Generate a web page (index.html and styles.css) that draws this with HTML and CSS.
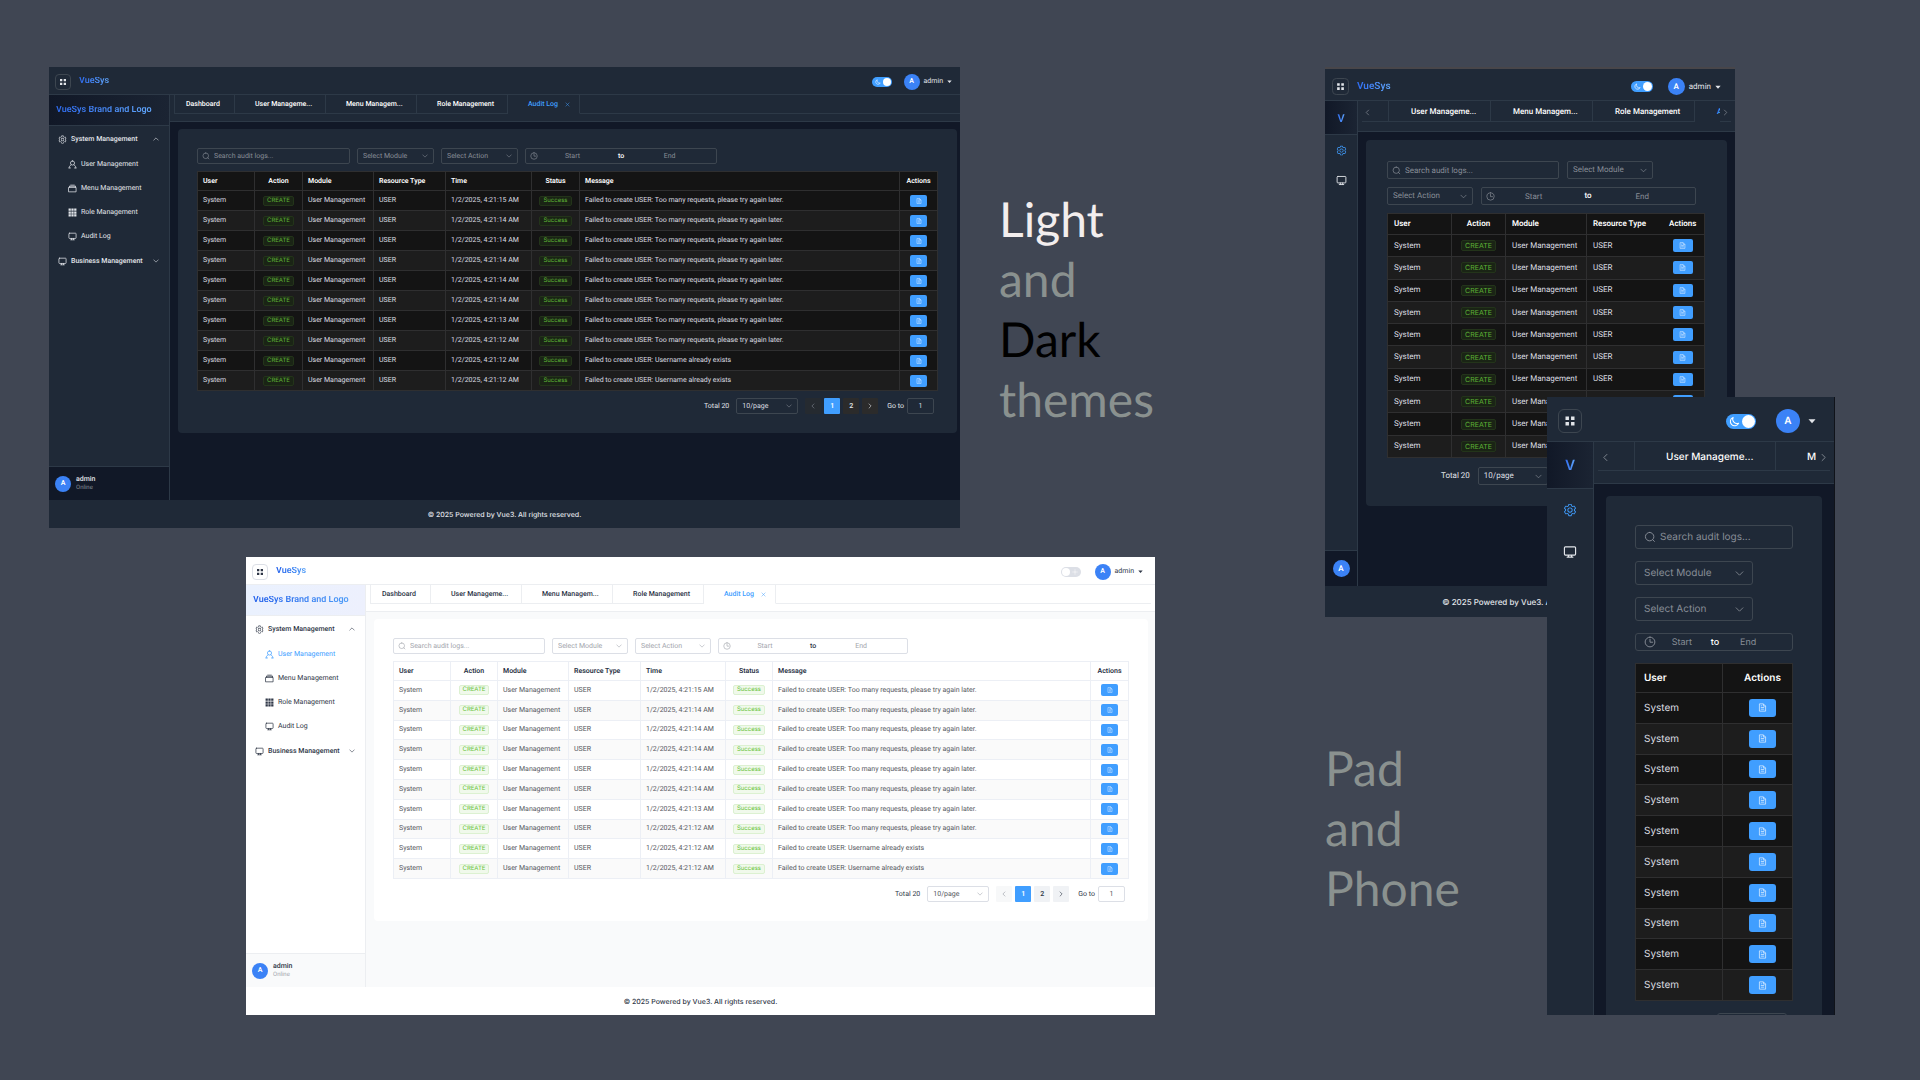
FILE: index.html
```html
<!DOCTYPE html>
<html lang="en">
<head>
<meta charset="utf-8">
<meta name="viewport" content="width=device-width, initial-scale=1">
<title>VueSys</title>
<link rel="stylesheet" href="styles.css">
<script src="app.js" defer></script>
</head>
<body>
<svg class="sprite" aria-hidden="true">
  <symbol id="i-apps" viewBox="0 0 16 16"><path fill="currentColor" d="M2 2h4.600v4.600H2zM9.400 2H14v4.600H9.400zM2 9.400h4.600V14H2zM9.400 9.400H14V14H9.400z"/></symbol>
  <symbol id="i-gear" viewBox="0 0 1024 1024"><path fill="currentColor" d="M600.704 64a32 32 0 0 1 30.464 22.208l35.2 109.376c14.784 7.232 28.928 15.36 42.432 24.512l112.384-24.192a32 32 0 0 1 34.432 15.36L944.32 364.8a32 32 0 0 1-4.032 37.504l-77.12 85.12a357.12 357.12 0 0 1 0 49.024l77.12 85.248a32 32 0 0 1 4.032 37.504l-88.704 153.6a32 32 0 0 1-34.432 15.296L708.8 803.904c-13.44 9.088-27.648 17.28-42.368 24.512l-35.264 109.376A32 32 0 0 1 600.704 960H423.296a32 32 0 0 1-30.464-22.208L357.696 828.48a351.616 351.616 0 0 1-42.56-24.64l-112.32 24.256a32 32 0 0 1-34.432-15.36L79.68 659.2a32 32 0 0 1 4.032-37.504l77.12-85.248a357.12 357.12 0 0 1 0-48.896l-77.12-85.248A32 32 0 0 1 79.68 364.8l88.704-153.6a32 32 0 0 1 34.432-15.296l112.32 24.256c13.568-9.152 27.776-17.408 42.56-24.64l35.2-109.312A32 32 0 0 1 423.232 64H600.64zm-23.424 64H446.72l-36.352 113.088-24.512 11.968a294.113 294.113 0 0 0-34.816 20.096l-22.656 15.36-116.224-25.088-65.28 113.152 79.68 88.192-1.92 27.136a293.12 293.12 0 0 0 0 40.192l1.92 27.136-79.808 88.192 65.344 113.152 116.224-25.024 22.656 15.296a294.113 294.113 0 0 0 34.816 20.096l24.512 11.968L446.72 896h130.688l36.48-113.152 24.448-11.904a288.282 288.282 0 0 0 34.752-20.096l22.592-15.296 116.288 25.024 65.28-113.152-79.744-88.192 1.92-27.136a293.12 293.12 0 0 0 0-40.256l-1.92-27.136 79.808-88.128-65.344-113.152-116.288 24.96-22.592-15.232a287.616 287.616 0 0 0-34.752-20.096l-24.448-11.904L577.344 128zM512 320a192 192 0 1 1 0 384 192 192 0 0 1 0-384zm0 64a128 128 0 1 0 0 256 128 128 0 0 0 0-256z"/></symbol>
  <symbol id="i-monitor" viewBox="0 0 1024 1024"><path fill="none" stroke="currentColor" stroke-width="84" stroke-linecap="round" d="M176 136h672a72 72 0 0 1 72 72v456a72 72 0 0 1-72 72H176a72 72 0 0 1-72-72V208a72 72 0 0 1 72-72zM400 740v130M624 740v130M304 890h416"/></symbol>
  <symbol id="i-user" viewBox="0 0 1024 1024"><path fill="none" stroke="currentColor" stroke-width="84" stroke-linecap="round" d="M512 104a236 236 0 1 1 0 472 236 236 0 0 1 0-472zM120 904c10-150 80-260 210-340M904 904c-10-150-80-260-210-340M120 904h160M744 904h160"/></symbol>
  <symbol id="i-files" viewBox="0 0 1024 1024"><path fill="none" stroke="currentColor" stroke-width="84" stroke-linejoin="round" stroke-linecap="round" d="M104 392h816v500H104zM180 260h664M300 130h424M180 260v120M844 260v120"/></symbol>
  <symbol id="i-grid" viewBox="0 0 16 16"><path fill="currentColor" d="M1 1h4v4H1zM6 1h4v4H6zM11 1h4v4h-4zM1 6h4v4H1zM6 6h4v4H6zM11 6h4v4h-4zM1 11h4v4H1zM6 11h4v4H6zM11 11h4v4h-4z"/></symbol>
  <symbol id="i-search" viewBox="0 0 1024 1024"><path fill="none" stroke="currentColor" stroke-width="80" stroke-linecap="round" d="M480 120a360 360 0 1 1 0 720 360 360 0 0 1 0-720zM740 740l150 150"/></symbol>
  <symbol id="i-clock" viewBox="0 0 1024 1024"><path fill="none" stroke="currentColor" stroke-width="80" stroke-linecap="round" d="M512 96a416 416 0 1 1 0 832 416 416 0 0 1 0-832zM512 280v250h230"/></symbol>
  <symbol id="i-down" viewBox="0 0 16 16"><path fill="none" stroke="currentColor" stroke-width="1.5" stroke-linecap="round" d="M2 5l6 6 6-6"/></symbol>
  <symbol id="i-up" viewBox="0 0 16 16"><path fill="none" stroke="currentColor" stroke-width="1.5" stroke-linecap="round" d="M2 11l6-6 6 6"/></symbol>
  <symbol id="i-left" viewBox="0 0 16 16"><path fill="none" stroke="currentColor" stroke-width="1.6" stroke-linecap="round" d="M10.500 2.500L5 8l5.500 5.500"/></symbol>
  <symbol id="i-right" viewBox="0 0 16 16"><path fill="none" stroke="currentColor" stroke-width="1.6" stroke-linecap="round" d="M5.500 2.500L11 8l-5.500 5.500"/></symbol>
  <symbol id="i-close" viewBox="0 0 16 16"><path fill="none" stroke="currentColor" stroke-width="1.500" d="M2 2l12 12M14 2L2 14"/></symbol>
  <symbol id="i-caret" viewBox="0 0 16 16"><path fill="currentColor" d="M1 4.500h14L8 12.500z"/></symbol>
  <symbol id="i-moon" viewBox="0 0 16 16"><path fill="none" stroke="currentColor" stroke-width="1.500" stroke-linejoin="round" d="M6 2A6.300 6.300 0 1 0 14 10.500 6.300 6.300 0 0 1 6 2z"/></symbol>
  <symbol id="i-sun" viewBox="0 0 16 16"><path fill="none" stroke="currentColor" stroke-width="1.500" d="M8 5a3 3 0 1 1 0 6 3 3 0 0 1 0-6zM8 1v2M8 13v2M1 8h2M13 8h2"/></symbol>
  <symbol id="i-doc" viewBox="0 0 16 16"><path fill="none" stroke="currentColor" stroke-width="1.100" stroke-linejoin="round" d="M2.500 1.500h7l4 4v9h-11zM9.500 1.500v4h4M5 8h6M5 11h6M5 5h2"/></symbol>
</svg>

<main class="stage">

  <section class="app app--full app--dark" aria-label="Desktop, dark theme">
    <header class="topbar">
      <button class="apps" type="button" aria-label="Toggle menu"><svg class="ico"><use href="#i-apps"/></svg></button>
      <a class="name" href="#">VueSys</a>
      <label class="switch"><input type="checkbox" role="switch" aria-label="Dark theme" checked><svg class="ico"><use href="#i-moon"/></svg></label>
      <button class="account" type="button"><span class="avatar">A</span><span class="who">admin</span><svg class="caret"><use href="#i-caret"/></svg></button>
    </header>
    <div class="body">
      <aside class="side">
        <div class="brand"><span>VueSys Brand and Logo</span></div>
        <nav class="menu">
          <a class="item" href="#"><svg class="ico"><use href="#i-gear"/></svg><span>System Management</span><svg class="chev"><use href="#i-up"/></svg></a>
          <a class="item item--sub" href="#"><svg class="ico"><use href="#i-user"/></svg><span>User Management</span></a>
          <a class="item item--sub" href="#"><svg class="ico"><use href="#i-files"/></svg><span>Menu Management</span></a>
          <a class="item item--sub" href="#"><svg class="ico"><use href="#i-grid"/></svg><span>Role Management</span></a>
          <a class="item item--sub" href="#"><svg class="ico"><use href="#i-monitor"/></svg><span>Audit Log</span></a>
          <a class="item" href="#"><svg class="ico"><use href="#i-monitor"/></svg><span>Business Management</span><svg class="chev"><use href="#i-down"/></svg></a>
        </nav>
        <div class="me"><span class="avatar">A</span><div class="me-text"><b>admin</b><small>Online</small></div></div>
      </aside>
      <div class="work">
        <div class="tabbar"><div class="tabs">
          <button class="tab tab--home" type="button">Dashboard</button>
          <button class="tab" type="button">User Manageme...</button>
          <button class="tab" type="button">Menu Managem...</button>
          <button class="tab" type="button">Role Management</button>
          <button class="tab tab--on" type="button">Audit Log<svg class="x"><use href="#i-close"/></svg></button>
        </div></div>
        <div class="content"><div class="card">
          <form class="filters">
            <label class="field field--search"><svg class="ico"><use href="#i-search"/></svg><input type="text" placeholder="Search audit logs..." aria-label="Search audit logs"></label>
            <label class="field field--pick"><select aria-label="Module"><option>Select Module</option></select><svg class="chev"><use href="#i-down"/></svg></label>
            <label class="field field--pick"><select aria-label="Action"><option>Select Action</option></select><svg class="chev"><use href="#i-down"/></svg></label>
            <div class="field field--range"><svg class="ico"><use href="#i-clock"/></svg><input type="text" placeholder="Start" aria-label="Start"><span>to</span><input type="text" placeholder="End" aria-label="End"></div>
          </form>
          <table class="logs" data-columns="user action module resource time status message open"></table>
          <div class="pager">
            <span>Total 20</span>
            <label class="field field--size"><select aria-label="Page size"><option>10/page</option></select><svg class="chev"><use href="#i-down"/></svg></label>
            <div class="pages">
              <button type="button" disabled aria-label="Previous"><svg class="chev"><use href="#i-left"/></svg></button>
              <button type="button" class="on">1</button>
              <button type="button">2</button>
              <button type="button" aria-label="Next"><svg class="chev"><use href="#i-right"/></svg></button>
            </div>
            <label class="goto">Go to <input class="field" type="text" value="1"></label>
          </div>
        </div></div>
      </div>
    </div>
    <footer class="foot">© 2025 Powered by Vue3. All rights reserved.</footer>
  </section>

  <section class="app app--full app--light" aria-label="Desktop, light theme">
    <header class="topbar">
      <button class="apps" type="button" aria-label="Toggle menu"><svg class="ico"><use href="#i-apps"/></svg></button>
      <a class="name" href="#">VueSys</a>
      <label class="switch"><input type="checkbox" role="switch" aria-label="Dark theme"><svg class="ico"><use href="#i-sun"/></svg></label>
      <button class="account" type="button"><span class="avatar">A</span><span class="who">admin</span><svg class="caret"><use href="#i-caret"/></svg></button>
    </header>
    <div class="body">
      <aside class="side">
        <div class="brand"><span>VueSys Brand and Logo</span></div>
        <nav class="menu">
          <a class="item" href="#"><svg class="ico"><use href="#i-gear"/></svg><span>System Management</span><svg class="chev"><use href="#i-up"/></svg></a>
          <a class="item item--sub item--on" href="#"><svg class="ico"><use href="#i-user"/></svg><span>User Management</span></a>
          <a class="item item--sub" href="#"><svg class="ico"><use href="#i-files"/></svg><span>Menu Management</span></a>
          <a class="item item--sub" href="#"><svg class="ico"><use href="#i-grid"/></svg><span>Role Management</span></a>
          <a class="item item--sub" href="#"><svg class="ico"><use href="#i-monitor"/></svg><span>Audit Log</span></a>
          <a class="item" href="#"><svg class="ico"><use href="#i-monitor"/></svg><span>Business Management</span><svg class="chev"><use href="#i-down"/></svg></a>
        </nav>
        <div class="me"><span class="avatar">A</span><div class="me-text"><b>admin</b><small>Online</small></div></div>
      </aside>
      <div class="work">
        <div class="tabbar"><div class="tabs">
          <button class="tab tab--home" type="button">Dashboard</button>
          <button class="tab" type="button">User Manageme...</button>
          <button class="tab" type="button">Menu Managem...</button>
          <button class="tab" type="button">Role Management</button>
          <button class="tab tab--on" type="button">Audit Log<svg class="x"><use href="#i-close"/></svg></button>
        </div></div>
        <div class="content"><div class="card">
          <form class="filters">
            <label class="field field--search"><svg class="ico"><use href="#i-search"/></svg><input type="text" placeholder="Search audit logs..." aria-label="Search audit logs"></label>
            <label class="field field--pick"><select aria-label="Module"><option>Select Module</option></select><svg class="chev"><use href="#i-down"/></svg></label>
            <label class="field field--pick"><select aria-label="Action"><option>Select Action</option></select><svg class="chev"><use href="#i-down"/></svg></label>
            <div class="field field--range"><svg class="ico"><use href="#i-clock"/></svg><input type="text" placeholder="Start" aria-label="Start"><span>to</span><input type="text" placeholder="End" aria-label="End"></div>
          </form>
          <table class="logs" data-columns="user action module resource time status message open"></table>
          <div class="pager">
            <span>Total 20</span>
            <label class="field field--size"><select aria-label="Page size"><option>10/page</option></select><svg class="chev"><use href="#i-down"/></svg></label>
            <div class="pages">
              <button type="button" disabled aria-label="Previous"><svg class="chev"><use href="#i-left"/></svg></button>
              <button type="button" class="on">1</button>
              <button type="button">2</button>
              <button type="button" aria-label="Next"><svg class="chev"><use href="#i-right"/></svg></button>
            </div>
            <label class="goto">Go to <input class="field" type="text" value="1"></label>
          </div>
        </div></div>
      </div>
    </div>
    <footer class="foot">© 2025 Powered by Vue3. All rights reserved.</footer>
  </section>

  <section class="app app--pad app--dark" aria-label="Pad">
    <header class="topbar">
      <button class="apps" type="button" aria-label="Toggle menu"><svg class="ico"><use href="#i-apps"/></svg></button>
      <a class="name" href="#">VueSys</a>
      <label class="switch"><input type="checkbox" role="switch" aria-label="Dark theme" checked><svg class="ico"><use href="#i-moon"/></svg></label>
      <button class="account" type="button"><span class="avatar">A</span><span class="who">admin</span><svg class="caret"><use href="#i-caret"/></svg></button>
    </header>
    <div class="body">
      <aside class="side">
        <div class="brand"><span>V</span></div>
        <nav class="menu">
          <a class="item item--on" href="#" aria-label="System Management"><svg class="ico"><use href="#i-gear"/></svg></a>
          <a class="item" href="#" aria-label="Business Management"><svg class="ico"><use href="#i-monitor"/></svg></a>
        </nav>
        <div class="me"><span class="avatar">A</span></div>
      </aside>
      <div class="work">
        <div class="tabbar"><div class="tabs">
          <button class="scroll scroll--prev" type="button" aria-label="Scroll left"><svg class="chev"><use href="#i-left"/></svg></button>
          <div class="strip">
            <button class="tab" type="button">User Manageme...</button>
            <button class="tab" type="button">Menu Managem...</button>
            <button class="tab" type="button">Role Management</button>
            <button class="tab tab--on" type="button">Audit Log</button>
          </div>
          <button class="scroll" type="button" aria-label="Scroll right"><svg class="chev"><use href="#i-right"/></svg></button>
        </div></div>
        <div class="content"><div class="card">
          <form class="filters">
            <label class="field field--search"><svg class="ico"><use href="#i-search"/></svg><input type="text" placeholder="Search audit logs..." aria-label="Search audit logs"></label>
            <label class="field field--pick"><select aria-label="Module"><option>Select Module</option></select><svg class="chev"><use href="#i-down"/></svg></label>
            <label class="field field--pick"><select aria-label="Action"><option>Select Action</option></select><svg class="chev"><use href="#i-down"/></svg></label>
            <div class="field field--range"><svg class="ico"><use href="#i-clock"/></svg><input type="text" placeholder="Start" aria-label="Start"><span>to</span><input type="text" placeholder="End" aria-label="End"></div>
          </form>
          <table class="logs" data-columns="user action module resource open"></table>
          <div class="pager">
            <span>Total 20</span>
            <label class="field field--size"><select aria-label="Page size"><option>10/page</option></select><svg class="chev"><use href="#i-down"/></svg></label>
          </div>
        </div></div>
      </div>
    </div>
    <footer class="foot">© 2025 Powered by Vue3. All rights reserved.</footer>
  </section>

  <section class="app app--phone app--dark" aria-label="Phone">
    <header class="topbar">
      <button class="apps" type="button" aria-label="Toggle menu"><svg class="ico"><use href="#i-apps"/></svg></button>
      <label class="switch"><input type="checkbox" role="switch" aria-label="Dark theme" checked><svg class="ico"><use href="#i-moon"/></svg></label>
      <button class="account" type="button" aria-label="Account"><span class="avatar">A</span><svg class="caret"><use href="#i-caret"/></svg></button>
    </header>
    <div class="body">
      <aside class="side">
        <div class="brand"><span>V</span></div>
        <nav class="menu">
          <a class="item item--on" href="#" aria-label="System Management"><svg class="ico"><use href="#i-gear"/></svg></a>
          <a class="item" href="#" aria-label="Business Management"><svg class="ico"><use href="#i-monitor"/></svg></a>
        </nav>
      </aside>
      <div class="work">
        <div class="tabbar"><div class="tabs">
          <button class="scroll scroll--prev" type="button" aria-label="Scroll left"><svg class="chev"><use href="#i-left"/></svg></button>
          <div class="strip">
            <button class="tab" type="button">User Manageme...</button>
            <button class="tab" type="button">Menu Managem...</button>
          </div>
          <button class="scroll" type="button" aria-label="Scroll right"><svg class="chev"><use href="#i-right"/></svg></button>
        </div></div>
        <div class="content"><div class="card">
          <form class="filters">
            <label class="field field--search"><svg class="ico"><use href="#i-search"/></svg><input type="text" placeholder="Search audit logs..." aria-label="Search audit logs"></label>
            <label class="field field--pick"><select aria-label="Module"><option>Select Module</option></select><svg class="chev"><use href="#i-down"/></svg></label>
            <label class="field field--pick"><select aria-label="Action"><option>Select Action</option></select><svg class="chev"><use href="#i-down"/></svg></label>
            <div class="field field--range"><svg class="ico"><use href="#i-clock"/></svg><input type="text" placeholder="Start" aria-label="Start"><span>to</span><input type="text" placeholder="End" aria-label="End"></div>
          </form>
          <table class="logs" data-columns="user open"></table>
          <div class="pager">
            <label class="field field--size"><select aria-label="Page size"><option></option></select></label>
          </div>
        </div></div>
      </div>
    </div>
  </section>

  <h2 class="caption caption--themes"><span class="w">Light</span><span>and</span><span class="k">Dark</span><span>themes</span></h2>
  <h2 class="caption caption--devices"><span>Pad</span><span>and</span><span>Phone</span></h2>
</main>
</body>
</html>
```

FILE: styles.css
```css
*, *::before { box-sizing: border-box; }

body {
  margin: 0;
  background: #404653;
  font-family: Inter, "Liberation Sans", sans-serif;
  text-rendering: geometricPrecision;
}

button, input, select {
  font: inherit;
  color: inherit;
  text-rendering: inherit;
  margin: 0;
  padding: 0;
  border: 0;
  background: none;
}

button { white-space: nowrap; }
a { color: inherit; text-decoration: none; }
.sprite { display: none; }
svg { display: block; flex: none; }

/* canvas on which the four windows and two captions are arranged */
.stage {
  display: grid;
  grid-template-columns:
    minmax(0, 49fr) minmax(0, 197fr) minmax(0, 714fr) minmax(0, 39fr)
    minmax(0, 156fr) minmax(0, 170fr) minmax(0, 222fr) minmax(0, 188fr)
    minmax(0, 100fr) minmax(0, 85fr);
  grid-template-rows: 330px 160px auto;
  padding: 67px 0 65px;
  align-items: start;
}

.app--full.app--dark { grid-area: 1 / 2 / 3 / 4; min-height: 461px; }
.app--light { grid-area: 3 / 3 / 4 / 6; min-height: 458px; }
.app--pad { grid-area: 1 / 7 / 4 / 9; min-height: 550px; }
.app--phone { grid-area: 2 / 8 / 4 / 10; height: 618px; }
.caption--themes { grid-area: 1 / 5 / 3 / 7; margin: 123px 0 0; }
.caption--devices { grid-area: 3 / 7 / 4 / 8; margin: 182px 0 0; }

.caption {
  display: flex;
  flex-direction: column;
  font: 400 48px/60px Lato, "Open Sans", sans-serif;
  color: #8a918f;
}
.caption .w { color: #f3eeee; }
.caption .k { color: #000; }

/* themes */
.app--dark {
  --panel: #1f2937;
  --back: #111827;
  --line: #2d3947;
  --text: #e2e5ea;
  --strong: #fff;
  --mute: #878d96;
  --ctl-line: #3d4650;
  --row: #141414;
  --row-alt: #1d1d1d;
  --cell-line: #2f2f30;
  --cell-text: #dcdee2;
  --tag-bg: #1a2415;
  --tag-line: #23341a;
  --tag-text: #5eb336;
  --accent: #409eff;
  --page-bg: #2b2b2b;
  --brand-bg: linear-gradient(90deg, #111827, #1b2433);
  --brand-text: linear-gradient(90deg, #2e6cf3, #60a5fa);
}

.app--light {
  --panel: #fff;
  --back: #f9fafb;
  --line: #eceef1;
  --text: #2f3747;
  --strong: #2b3346;
  --mute: #a3a6ad;
  --ctl-line: #dcdfe6;
  --row: #fff;
  --row-alt: #fafafa;
  --cell-line: #eceff5;
  --cell-text: #55585e;
  --tag-bg: #f0f9eb;
  --tag-line: #dcf1d1;
  --tag-text: #67c23a;
  --accent: #409eff;
  --page-bg: #f0f2f5;
  --brand-bg: linear-gradient(90deg, #eaf1fe, #edf0fd);
  --brand-text: linear-gradient(90deg, #1d5cea, #4f9df8);
}

/* scale of each device */
.app--full {
  --fs: 7px; --fs-range: 7px; --fs-tag: 6px; --fs-name: 9px; --fs-brand: 9px;
  --bar: 28px; --edge: 6px; --side: 121px; --brand-h: 31px; --me: 34px;
  --avatar: 16px; --ctl: 16px; --icon: 8px; --side-icon: 9px; --chev: 6px; --caret: 5px; --radius: 2px;
  --sw: 20px; --sh: 10px;
  --tabs-h: 19px; --tabs-pad: 7px; --tab-w: 91px; --tab-in: 20px;
  --gutter: 7px; --pad: 19px; --gap: 7px;
  --search: 153px; --pick: 77px; --range: 192px; --range-end: 12px; --to: 11px;
  --head-h: 19px; --row-h: 20px; --cell: 5px; --open-w: 17px; --open-h: 12px;
  --size: 62px; --foot: 28px;
}

.app--light {
  --side: 120px; --search: 152px; --pick: 76px; --range: 190px;
  --head-h: 19px; --row-h: 19px;
}

.app--pad {
  --fs: 8px; --fs-range: 8px; --fs-tag: 7px; --fs-name: 10px; --fs-brand: 11px;
  --bar: 32px; --edge: 7px; --side: 33px; --brand-h: 34px; --me: 36px;
  --avatar: 17px; --ctl: 18px; --icon: 9px; --side-icon: 11px; --chev: 7px; --caret: 6px; --radius: 2px;
  --sw: 22px; --sh: 11px;
  --tabs-h: 21px; --tabs-pad: 9px; --tab-w: 102px; --tab-in: 22px;
  --gutter: 8px; --pad: 21px; --gap: 8px;
  --search: 172px; --pick: 86px; --range: 215px; --range-end: 14px; --to: 12px;
  --head-h: 21px; --row-h: 22px; --cell: 6px; --open-w: 20px; --open-h: 13px;
  --size: 70px; --foot: 31px;
  border-top: 2px solid #48464a;
}

/* the small sizes are set in a narrower face */
.app--full, .app--pad { font-family: Roboto, Inter, sans-serif; }
.tag, .foot { font-family: Inter, sans-serif; }

.app--phone {
  --fs: 10px; --fs-range: 9px; --fs-name: 14px; --fs-brand: 14px;
  --bar: 45px; --edge: 11px; --side: 47px; --brand-h: 47px;
  --avatar: 24px; --ctl: 24px; --icon: 12px; --side-icon: 14px; --chev: 9px; --caret: 8px; --radius: 3px;
  --sw: 30px; --sh: 15px;
  --tabs-h: 29px; --tabs-pad: 12px; --tab-w: 141px; --tab-in: 31px;
  --gutter: 12px; --pad: 29px; --gap: 12px;
  --pick: 118px; --range-end: 18px; --to: 3px;
  --head-h: 29px; --row-h: 30px; --cell: 8px; --open-w: 27px; --open-h: 18px;
  --size: 70px;
  border-right: 1px solid #10131a;
}

.app {
  display: flex;
  flex-direction: column;
  overflow: hidden;
  background: var(--panel);
  color: var(--text);
  font-size: var(--fs);
  line-height: 1;
}

/* top bar */
.topbar {
  display: flex;
  align-items: center;
  flex: none;
  height: var(--bar);
  padding: 2px var(--edge) 0;
  border-bottom: 1px solid var(--line);
}
.app--phone .topbar, .app--pad .topbar { padding-top: 4px; }

.ico { width: var(--icon); height: var(--icon); }
.side .ico { width: var(--side-icon); height: var(--side-icon); }
.chev { width: var(--chev); height: var(--chev); }

.apps {
  display: grid;
  place-items: center;
  width: var(--avatar);
  height: var(--avatar);
  border: 1px solid var(--ctl-line);
  border-radius: 25%;
}

.name {
  margin-left: 8px;
  font-size: var(--fs-name);
  font-weight: 600;
}

.name, .brand span {
  background: var(--brand-text);
  background-clip: text;
  -webkit-background-clip: text;
  color: transparent;
}

.switch { display: grid; align-items: center; margin-left: auto; color: #fff; }
.switch > * { grid-area: 1 / 1; }
.switch .ico { margin-left: 3px; width: calc(var(--sh) - 4px); height: calc(var(--sh) - 4px); z-index: 1; }

.switch input {
  appearance: none;
  display: flex;
  width: var(--sw);
  height: var(--sh);
  padding: 1px;
  border-radius: var(--sh);
  background: #dcdfe6;
}
.switch input::before {
  content: "";
  height: 100%;
  aspect-ratio: 1;
  border-radius: 50%;
  background: #fff;
}
.switch input:checked { background: var(--accent); justify-content: flex-end; }
.app--light .switch .ico { margin-left: 11px; }

.account { display: flex; align-items: center; gap: 4px; margin: 0 2px 0 12px; }
.app--light .account { margin: 0 6px 0 14px; }
.app--pad .account { margin: 0 7px 0 15px; }
.app--phone .account { gap: 8px; margin: 0 7px 0 20px; }
.caret { width: var(--caret); height: var(--caret); }

.avatar {
  display: grid;
  place-items: center;
  flex: none;
  width: var(--avatar);
  height: var(--avatar);
  border-radius: 50%;
  background: #3b82f6;
  color: #fff;
  font-weight: 600;
}

/* side bar */
.body { display: flex; flex: 1; min-height: 0; }

.side {
  display: flex;
  flex-direction: column;
  flex: none;
  width: var(--side);
  border-right: 1px solid var(--line);
}

.brand {
  display: flex;
  align-items: center;
  height: var(--brand-h);
  padding: 1px 0 0 7px;
  border-bottom: 1px solid var(--line);
  background: var(--brand-bg);
  font-size: var(--fs-brand);
  font-weight: 600;
  white-space: nowrap;
}

.menu { flex: 1; }
.item {
  display: flex;
  align-items: center;
  gap: 4px;
  height: 26px;
  padding: 0 10px 0 9px;
  font-weight: 500;
}
.item .chev { margin-left: auto; }
.item--sub { height: 24px; padding-left: 19px; font-weight: 400; }
.item--on { color: var(--accent); }

.me {
  display: flex;
  align-items: center;
  gap: 5px;
  height: var(--me);
  padding-left: 6px;
  border-top: 1px solid var(--line);
  background: var(--back);
}
.me-text { display: flex; flex-direction: column; gap: 2px; }
.me b { font-weight: 500; }
.me small { font-size: var(--fs-tag); color: var(--mute); }

.app--pad .brand, .app--phone .brand { justify-content: center; padding: 2px 0 0; }
.app--pad .me { justify-content: center; padding: 0; }
.app--pad .item, .app--phone .item { justify-content: center; padding: 0; }
.app--pad .item { height: 30px; }
.app--phone .item { height: 42px; }

/* tabs */
.work { flex: 1; display: flex; flex-direction: column; min-width: 0; }
.tabbar { padding: 0 4px var(--tabs-pad); border-bottom: 1px solid var(--line); }
.app--dark.app--full .tabbar { padding-right: 0; }
.tabs { display: flex; height: var(--tabs-h); }
.strip { display: flex; flex: 1; min-width: 0; overflow: hidden; }
.tabs::after { content: ""; flex: 1; border-bottom: 1px solid var(--line); }
.app--pad .tabs::after, .app--phone .tabs::after { display: none; }

.tab {
  display: flex;
  align-items: center;
  flex: none;
  width: var(--tab-w);
  padding-left: var(--tab-in);
  border: solid var(--line);
  border-width: 0 1px 1px 0;
  color: var(--strong);
  font-weight: 500;
}
.strip .tab, .scroll { padding-top: 2px; }
.tab--home { width: 61px; padding-left: 11px; border-left-width: 1px; }
.tab--on { color: var(--accent); border-bottom-color: transparent; }
.app--full .tab--on { width: 72px; }
.x { width: 5px; height: 5px; margin-left: 7px; }

.scroll {
  display: grid;
  place-items: center;
  flex: none;
  width: 11px;
  border-bottom: 1px solid var(--line);
  color: var(--mute);
}
.scroll--prev { width: 27px; padding-right: 16px; border-right: 1px solid var(--line); }
.app--phone .scroll { width: 14px; }
.app--phone .scroll--prev { width: 37px; padding-right: 22px; }

/* content */
.content { flex: 1; padding: var(--gutter); background: var(--back); }
.app--full .content { padding-left: 8px; }
.app--dark.app--full .content { padding-right: 3px; }
.card { padding: var(--pad); border-radius: 4px; background: var(--panel); }
.app--pad .card { padding-right: 22px; }

.filters { display: flex; flex-wrap: wrap; gap: var(--gap); margin-bottom: var(--gap); }

.field {
  display: flex;
  align-items: center;
  height: var(--ctl);
  padding: 0 5px;
  border: 1px solid var(--ctl-line);
  border-radius: var(--radius);
  color: var(--mute);
}
.field input { flex: 1; min-width: 0; width: 0; }
.field input::placeholder { color: var(--mute); opacity: 1; }
.field select { appearance: none; flex: 1; min-width: 0; height: 100%; }
.field--search { gap: 4px; width: var(--search); padding-left: 4px; }
.field--pick { width: var(--pick); }
.field--range { width: var(--range); padding: 0 var(--range-end) 0 4px; font-size: var(--fs-range); }
.field--range input { text-align: center; }
.field--range span { padding: 0 var(--to); color: var(--strong); font-weight: 500; }

.app--phone .field { padding-left: 8px; padding-right: 8px; }
.app--phone .filters { flex-direction: column; }
.app--phone .field--search { width: 100%; }
.app--phone .field--range { width: 100%; height: 18px; padding-right: var(--range-end); }

/* log table */
.logs {
  width: 100%;
  table-layout: fixed;
  border-collapse: collapse;
  border: 1px solid var(--cell-line);
  background: var(--row);
  color: var(--cell-text);
}
.logs th, .logs td {
  padding: 0 var(--cell);
  border: 1px solid var(--cell-line);
  text-align: left;
  white-space: nowrap;
  vertical-align: middle;
}
.logs th { height: var(--head-h); color: var(--strong); font-weight: 600; }
.logs td { height: var(--row-h); }
.logs tbody tr:nth-child(even) { background: var(--row-alt); }
.logs .user { width: 57px; }
.logs .action, .logs .status { width: 48px; }
.logs .module { width: 71px; }
.logs .resource { width: 72px; }
.logs .time { width: 86px; }
.logs .open { width: 38px; }
.logs .action, .logs .status, .logs .open { padding: 0; text-align: center; }
.app--light .logs { height: 218px; }
.app--light .logs .action, .app--light .logs .status { width: 47px; }
.app--light .logs .time { width: 85px; }

.app--pad .logs { height: 245px; }
.app--pad .logs .user { width: 64px; }
.app--pad .logs .action { width: 54px; }
.app--pad .logs .module { width: 81px; }
.app--pad .logs .resource { width: auto; border-right: 0; }
.app--pad .logs .open { width: 43px; border-left: 0; }
.app--phone .logs { height: 338px; }
.app--phone .logs .user { width: auto; }
.app--phone .logs .open { width: 70px; padding-left: 10px; }

.tag {
  display: inline-block;
  padding: 0 3px;
  border: 1px solid var(--tag-line);
  border-radius: 2px;
  background: var(--tag-bg);
  color: var(--tag-text);
  font-size: var(--fs-tag);
  line-height: 8px;
  vertical-align: middle;
}
.app--pad .tag { line-height: 9px; }

.view {
  display: inline-grid;
  place-items: center;
  width: var(--open-w);
  height: var(--open-h);
  border-radius: var(--radius);
  background: var(--accent);
  color: #fff;
  vertical-align: middle;
}
.view svg { width: var(--chev); height: var(--chev); }

/* pagination */
.pager {
  display: flex;
  align-items: center;
  justify-content: flex-end;
  gap: 7px;
  padding: var(--gap) 4px 0 0;
}
.field--size { width: var(--size); color: var(--cell-text); }
.field--size .chev { color: var(--mute); }
.pages { display: flex; gap: 3px; }
.pages button {
  display: grid;
  place-items: center;
  width: 16px;
  height: var(--ctl);
  border-radius: 1px;
  background: var(--page-bg);
  font-weight: 600;
}
.pages button:disabled { opacity: 0.5; }
.pages .on { background: var(--accent); color: #fff; }
.goto { display: flex; align-items: center; gap: 3px; margin-left: 2px; }
.goto input { width: 27px; text-align: center; color: var(--cell-text); }
.app--pad .pager { justify-content: flex-start; padding: 9px 0 0 54px; gap: 8px; }
.app--phone .pager { padding-right: 6px; }

.foot {
  display: grid;
  place-items: center;
  flex: none;
  height: var(--foot);
  font-weight: 500;
}
```

FILE: app.js
```js
const stamps = ["15", "14", "14", "14", "14", "14", "13", "12", "12", "12"];

const logs = stamps.map((sec, i) => ({
  user: "System",
  action: "CREATE",
  module: "User Management",
  resource: "USER",
  time: `1/2/2025, 4:21:${sec} AM`,
  status: "Success",
  message: i < 8
    ? "Failed to create USER: Too many requests, please try again later."
    : "Failed to create USER: Username already exists",
}));

const titles = {
  user: "User", action: "Action", module: "Module", resource: "Resource Type",
  time: "Time", status: "Status", message: "Message", open: "Actions",
};

function cell(key, log) {
  if (key === "open") {
    return '<button class="view" type="button" aria-label="View log"><svg><use href="#i-doc"/></svg></button>';
  }
  if (key === "action" || key === "status") return `<span class="tag">${log[key]}</span>`;
  return log[key];
}

for (const table of document.querySelectorAll(".logs")) {
  const keys = table.dataset.columns.split(" ");
  const head = keys.map((k) => `<th scope="col" class="${k}">${titles[k]}</th>`).join("");
  const rows = logs
    .map((log) => `<tr>${keys.map((k) => `<td class="${k}">${cell(k, log)}</td>`).join("")}</tr>`)
    .join("");
  table.innerHTML = `<thead><tr>${head}</tr></thead><tbody>${rows}</tbody>`;
}
```
